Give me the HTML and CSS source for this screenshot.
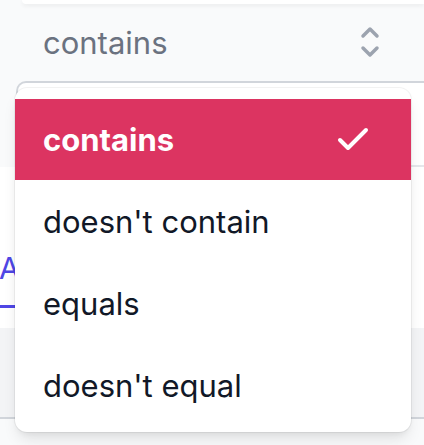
FILE: index.html
```html
<!DOCTYPE html>
<html>
<head>
<meta charset="utf-8">
<link rel="stylesheet" href="styles.css">
</head>
<body>
<div class="page">
  <div class="topcard"></div>
  <div class="select">
    <span class="select-value">contains</span>
    <svg class="chevrons" width="20" height="34" viewBox="0 0 20 34">
      <path d="M3 10 L10 3 L17 10" fill="none" stroke="#9ca3af" stroke-width="3.5" stroke-linecap="round" stroke-linejoin="round"/>
      <path d="M3 22 L10 29 L17 22" fill="none" stroke="#9ca3af" stroke-width="3.5" stroke-linecap="round" stroke-linejoin="round"/>
    </svg>
  </div>
  <div class="box">
    <div class="box-head"></div>
  </div>
  <div class="tabs">
    <span class="tab">All</span>
  </div>
  <div class="gray-area"></div>
  <div class="lower"></div>

  <ul class="menu">
    <li class="item selected"><span>contains</span>
      <svg class="check" width="34" height="28" viewBox="0 0 34 28">
        <path d="M4 14 L12 22 L30 4" fill="none" stroke="#ffffff" stroke-width="4" stroke-linecap="round" stroke-linejoin="round"/>
      </svg>
    </li>
    <li class="item"><span>doesn't contain</span></li>
    <li class="item"><span>equals</span></li>
    <li class="item"><span>doesn't equal</span></li>
  </ul>
</div>
</body>
</html>
```
FILE: styles.css
```css
html, body {
  margin: 0;
  padding: 0;
}
body {
  width: 424px;
  height: 445px;
  overflow: hidden;
  background: #f9fafb;
  font-family: Inter, "Noto Sans", sans-serif;
}
.page {
  position: relative;
  width: 424px;
  height: 445px;
  overflow: hidden;
}
.topcard {
  height: 4px;
  margin-left: 22px;
  background: #ffffff;
  border-bottom-left-radius: 8px;
  box-shadow: 0 2px 4px rgba(0,0,0,0.06);
}
.select {
  height: 77px;
  display: flex;
  align-items: center;
  justify-content: space-between;
  padding: 0 44px 0 43px;
  box-sizing: border-box;
}
.select-value {
  font-size: 31px;
  color: #6b7280;
  line-height: 1;
}
.chevrons {
  display: block;
}
.box {
  margin-left: 16px;
  border-top: 2px solid #d1d5db;
  border-left: 2px solid #d1d5db;
  border-top-left-radius: 10px;
  background: #ffffff;
}
.box-head {
  height: 82px;
  border-bottom: 2px solid #e5e7eb;
}
.tabs {
  height: 161px;
  background: #ffffff;
  display: flex;
  align-items: flex-end;
}
.tab {
  margin-left: -1px;
  font-size: 30px;
  color: #4f46e5;
  line-height: 1;
  padding-bottom: 22px;
  border-bottom: 3px solid #4f46e5;
  margin-bottom: 20px;
}
.gray-area {
  height: 89px;
  background: #f3f4f6;
  border-bottom: 2px solid #d1d5db;
}
.lower {
  height: 40px;
  background: #f9fafb;
}
.menu {
  position: absolute;
  left: 15px;
  top: 88px;
  width: 396px;
  margin: 0;
  padding: 11px 0 6px;
  list-style: none;
  background: #ffffff;
  border-radius: 12px;
  box-shadow: 0 10px 15px -3px rgba(0,0,0,0.10), 0 4px 6px -2px rgba(0,0,0,0.05), 0 0 0 1px rgba(0,0,0,0.05);
  box-sizing: border-box;
}
.item {
  height: 82px;
  display: flex;
  align-items: center;
  justify-content: space-between;
  padding: 0 41px 0 28px;
  font-size: 31px;
  color: #111827;
  line-height: 1;
}
.item.selected {
  height: 81px;
  background: #dc3461;
  color: #ffffff;
  font-weight: 700;
}
.check {
  display: block;
}
```
